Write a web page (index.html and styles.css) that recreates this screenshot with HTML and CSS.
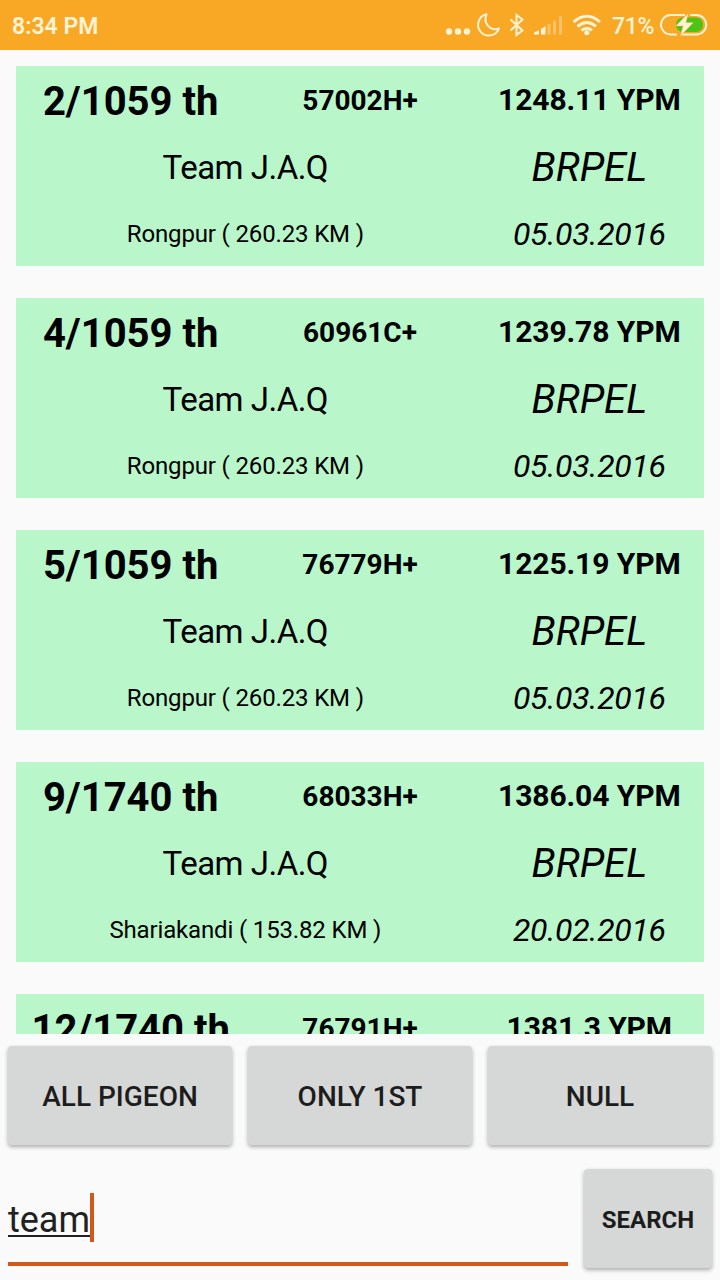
FILE: index.html
```html
<!DOCTYPE html>
<html lang="en">
<head>
    <meta charset="UTF-8">
    <meta name="viewport" content="width=device-width, initial-scale=1.0">
    <title>Pigeon results</title>
    <link rel="stylesheet" href="styles.css">
</head>
<body>
    <div class="statusbar">
        <span class="time">8:34 PM</span>
        <svg class="status-icons" width="160" height="50" viewBox="0 0 160 50">
            <!-- more -->
            <g fill="#fff3d6">
                <circle cx="9" cy="31.5" r="3.2"/>
                <circle cx="18" cy="31.5" r="3.2"/>
                <circle cx="27" cy="31.5" r="3.2"/>
            </g>
            <!-- moon -->
            <path d="M46.500 14.200A10.800 10.800 0 1 0 59 28.500C51 31.500 42.500 24 46.500 14.200Z" fill="none" stroke="#fff3d6" stroke-width="2" stroke-linejoin="round"/>
            <!-- bluetooth -->
            <path d="M70.500 19.500L82.500 30.500L76.500 35V15L82.500 19.500L70.500 30.500" fill="none" stroke="#fff3d6" stroke-width="2"/>
            <!-- signal -->
            <path d="M94 34.500V32.500L99 30V34.500ZM101 34.500V29L105.500 26V34.500Z" fill="#fff3d6"/>
            <path d="M107.500 34.500V24H110.500V34.500ZM113 34.500V20.500H116V34.500ZM119 34.500V16H122V34.500Z" fill="#fbc169"/>
            <!-- wifi -->
            <g fill="none" stroke="#fff3d6" stroke-width="3">
                <path d="M133.500 22Q147 10.500 160 22"/>
                <path d="M137.500 26.500Q147 18.500 156 26.500"/>
                <path d="M141.500 30.500Q147 26 152 30.500"/>
            </g>
            <circle cx="146.800" cy="32.800" r="2.500" fill="#fff3d6"/>
        </svg>
        <span class="percent">71%</span>
        <svg class="battery" width="50" height="50" viewBox="0 0 50 50">
            <rect x="16" y="17.500" width="27" height="14.500" rx="7" fill="#4cc417"/>
            <path d="M17 34.500H10.700A9.700 9.700 0 0 1 10.700 15H25M30 15H36.500A9.700 9.700 0 0 1 36.500 34.500H22" fill="none" stroke="#fff3d6" stroke-width="2"/>
            <path d="M28.500 13L15.500 26H23L20 36.500L33.500 22.500H26Z" fill="#fff3d6" stroke="#f9a825" stroke-width="0.500"/>
        </svg>
    </div>

    <div class="list">
        <div class="card">
            <div class="rank">2/1059 th</div>
            <div class="ring">57002H+</div>
            <div class="speed">1248.11 YPM</div>
            <div class="owner">Team J.A.Q</div>
            <div class="club">BRPEL</div>
            <div class="place">Rongpur ( 260.23 KM )</div>
            <div class="date">05.03.2016</div>
        </div>
        <div class="card">
            <div class="rank">4/1059 th</div>
            <div class="ring">60961C+</div>
            <div class="speed">1239.78 YPM</div>
            <div class="owner">Team J.A.Q</div>
            <div class="club">BRPEL</div>
            <div class="place">Rongpur ( 260.23 KM )</div>
            <div class="date">05.03.2016</div>
        </div>
        <div class="card">
            <div class="rank">5/1059 th</div>
            <div class="ring">76779H+</div>
            <div class="speed">1225.19 YPM</div>
            <div class="owner">Team J.A.Q</div>
            <div class="club">BRPEL</div>
            <div class="place">Rongpur ( 260.23 KM )</div>
            <div class="date">05.03.2016</div>
        </div>
        <div class="card">
            <div class="rank">9/1740 th</div>
            <div class="ring">68033H+</div>
            <div class="speed">1386.04 YPM</div>
            <div class="owner">Team J.A.Q</div>
            <div class="club">BRPEL</div>
            <div class="place">Shariakandi ( 153.82 KM )</div>
            <div class="date">20.02.2016</div>
        </div>
        <div class="card">
            <div class="rank">12/1740 th</div>
            <div class="ring">76791H+</div>
            <div class="speed">1381.3 YPM</div>
        </div>
    </div>

    <div class="filters">
        <button>ALL PIGEON</button>
        <button>ONLY 1ST</button>
        <button>NULL</button>
    </div>

    <div class="search">
        <div class="field"><span class="typed">team</span><span class="caret"></span></div>
        <button class="search-btn">SEARCH</button>
    </div>
</body>
</html>
```

FILE: styles.css
```css
* {
    box-sizing: border-box;
}
body {
    margin: 0;
    height: 1280px;
    overflow: hidden;
    display: flex;
    flex-direction: column;
    background-color: #fafafa;
    color: #000;
    font-family: Roboto, sans-serif;
}
.statusbar {
    height: 50px;
    flex: none;
    display: flex;
    align-items: center;
    padding: 0 10px 0 12px;
    background-color: #f9a825;
    color: #fff3d6;
    font-size: 23px;
    font-weight: 600;
}
.time {
    margin-right: auto;
    padding-top: 2px;
}
.status-icons {
    margin-right: 12px;
    overflow: visible;
}
.percent {
    width: 48px;
    padding-top: 2px;
    font-weight: 500;
    letter-spacing: -0.3px;
    white-space: nowrap;
}
.list {
    height: 984px;
    flex: none;
    overflow: hidden;
    padding: 16px;
}
.card {
    height: 200px;
    margin-bottom: 32px;
    display: grid;
    grid-template-columns: repeat(3, 1fr);
    grid-template-rows: repeat(3, 1fr);
    background-color: #b9f6ca;
}
.card div {
    display: flex;
    align-items: center;
    justify-content: center;
    padding-top: 0.1em;
    white-space: nowrap;
}
.rank {
    font-size: 40px;
    font-weight: bold;
}
.ring {
    font-size: 28px;
    font-weight: bold;
}
.card .speed {
    padding-top: 1px;
    font-size: 30px;
    font-weight: bold;
    letter-spacing: -0.1px;
}
.card .owner {
    grid-column: span 2;
    padding-top: 3px;
    font-size: 33px;
    letter-spacing: -0.5px;
}
.club {
    font-size: 40px;
    font-style: italic;
}
.place {
    grid-column: span 2;
    font-size: 24px;
    letter-spacing: -0.15px;
}
.date {
    font-size: 32px;
    font-style: italic;
    letter-spacing: -0.3px;
}
button {
    height: 99px;
    padding: 2px 0 0;
    border: none;
    border-radius: 4px;
    background-color: #d6d7d7;
    box-shadow: 0 2px 4px rgba(0,0,0,0.32);
    color: #1d1d1d;
    font-family: inherit;
    font-size: 28px;
    font-weight: 500;
}
.filters {
    display: grid;
    grid-template-columns: repeat(3, 1fr);
    gap: 16px;
    padding: 12px 8px;
}
.search {
    display: flex;
    gap: 16px;
    padding: 12px 8px;
}
.field {
    flex: 1;
    height: 97px;
    display: flex;
    align-items: flex-start;
    padding-top: 24px;
    border-bottom: 4px solid #d1581a;
    color: #212121;
    font-size: 36px;
}
.typed {
    height: 44px;
    padding-top: 6px;
    border-bottom: 2px solid #212121;
    line-height: 42px;
}
.caret {
    width: 4px;
    height: 49px;
    background-color: #d1581a;
}
.search-btn {
    width: 128px;
    font-size: 24px;
    font-weight: bold;
}
```
